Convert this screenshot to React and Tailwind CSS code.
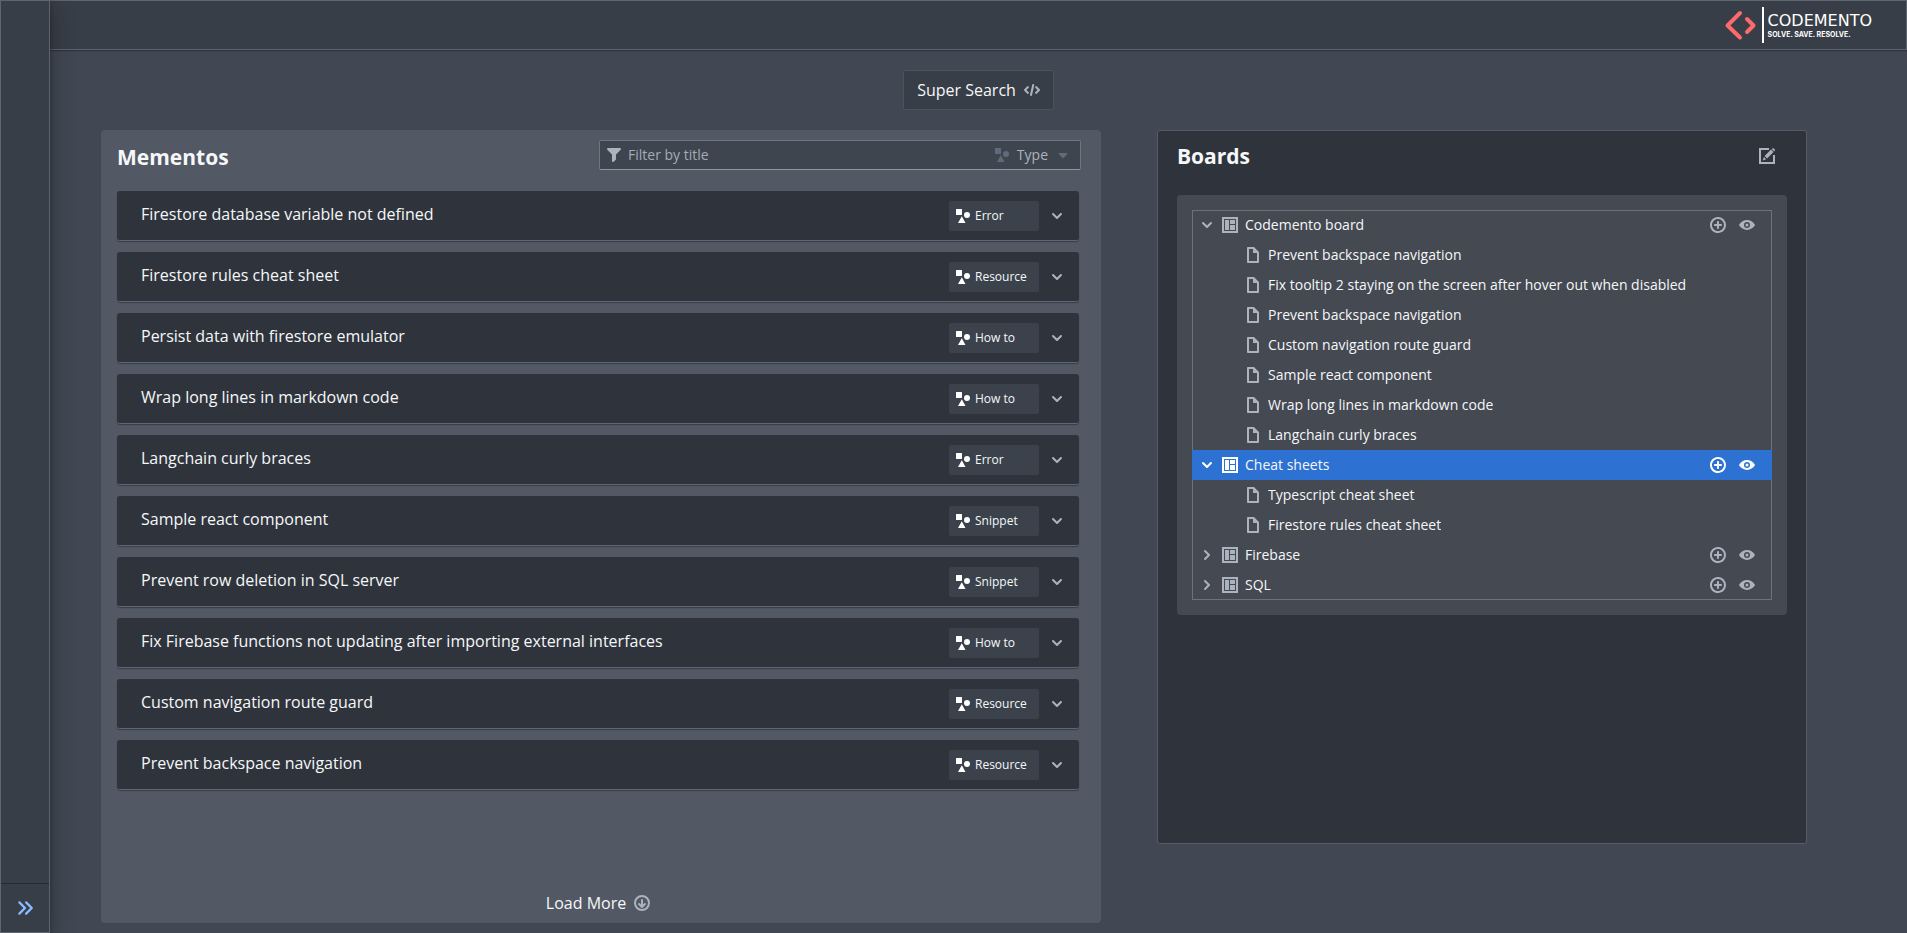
import { useState } from 'react';

const ICONS = {
  chevronDown: 'M12 5c-.28 0-.53.11-.71.29L8 8.59l-3.29-3.3a1.003 1.003 0 00-1.42 1.42l4 4c.18.18.43.29.71.29s.53-.11.71-.29l4-4A1.003 1.003 0 0012 5z',
  chevronRight: 'M10.71 7.29l-4-4a1.003 1.003 0 00-1.42 1.42L8.59 8 5.3 11.29c-.19.18-.3.43-.3.71a1.003 1.003 0 001.71.71l4-4c.18-.18.29-.43.29-.71 0-.28-.11-.53-.29-.71z',
  doubleChevron: 'M9 8c0-.28-.11-.53-.29-.71l-5-5a1.003 1.003 0 00-1.42 1.42L6.59 8 2.3 12.29c-.19.18-.3.43-.3.71a1.003 1.003 0 001.71.71l5-5C8.89 8.53 9 8.28 9 8zm5.71-.71l-5-5a1.003 1.003 0 00-1.42 1.42L12.59 8 8.3 12.29c-.19.18-.3.43-.3.71a1.003 1.003 0 001.71.71l5-5c.18-.18.29-.43.29-.71 0-.28-.11-.53-.29-.71z',
  filter: 'M13.99.99h-12a1.003 1.003 0 00-.71 1.71l4.71 4.71V14a1.003 1.003 0 001.71.71l2-2c.18-.18.29-.43.29-.71V7.41L14.7 2.7a1.003 1.003 0 00-.71-1.71z',
  code: 'M15.7 7.3l-3-3a1 1 0 00-1.4 1.4L13.6 8l-2.3 2.3a1 1 0 001.4 1.4l3-3a1 1 0 000-1.4zM4.7 5.7a1 1 0 00-1.4-1.4l-3 3a1 1 0 000 1.4l3 3a1 1 0 001.4-1.4L2.4 8l2.3-2.3zM9.2 2a1 1 0 00-1 .8l-2.2 10a1 1 0 002 .4l2.2-10a1 1 0 00-1-1.2z',
  add: 'M10.99 6.99h-2v-2c0-.55-.45-1-1-1s-1 .45-1 1v2h-2c-.55 0-1 .45-1 1s.45 1 1 1h2v2c0 .55.45 1 1 1s1-.45 1-1v-2h2c.55 0 1-.45 1-1s-.45-1-1-1zm-3-7c-4.42 0-8 3.58-8 8s3.58 8 8 8 8-3.58 8-8-3.58-8-8-8zm0 14c-3.31 0-6-2.69-6-6s2.69-6 6-6 6 2.69 6 6-2.69 6-6 6z',
  eye: 'M8 6.500a1.500 1.500 0 100 3 1.500 1.500 0 000-3zm7.9 1.200C14.2 5 11.2 3 8 3S1.8 5 .1 7.700a.6.6 0 000 .6C1.8 11 4.8 13 8 13s6.2-2 7.900-4.700a.6.6 0 000-.6zM8 11a3 3 0 110-6 3 3 0 010 6z',
  document: 'M9 0H3c-.55 0-1 .45-1 1v14c0 .55.45 1 1 1h10c.55 0 1-.45 1-1V5L9 0zm3 14H4V2h4v4h4v8z',
  board: 'M0 0h16v16H0zM2 2v12h12V2zM3 3h4v10H3zM8 3h5v4H8zM8 8h5v5H8z',
  edit: 'M14 14H2V2h8V0H0v16h16V7h-2zM3.500 12.500l3.700-1.300L5 9zM12 1.500L5.600 8l2.500 2.500L14.500 4zM15.300 3.300a1.700 1.700 0 10-2.500-2.500l-.1.100 2.500 2.500z',
  circleDown: 'M8 0a8 8 0 100 16A8 8 0 008 0zm0 14A6 6 0 118 2a6 6 0 010 12zm3-6c-.28 0-.53.11-.71.29L9 9.590V5c0-.55-.45-1-1-1s-1 .45-1 1v4.590L5.710 8.290a1.003 1.003 0 00-1.420 1.420l3 3c.18.18.43.29.71.29s.53-.11.71-.29l3-3A1.003 1.003 0 0011 8z',
  shapes: 'M1.500 1h5c.3 0 .5.2.5.5v5c0 .3-.2.5-.5.5h-5a.5.5 0 01-.5-.5v-5c0-.3.2-.5.5-.5zM12 4a3 3 0 110 6 3 3 0 010-6zM6.800 8.300l3.700 6.700h-7.500z',
  caret: 'M4 6h8a.5.5 0 01.4.8l-4 4.500a.5.5 0 01-.8 0l-4-4.500A.5.500 0 014 6z',
};

const MEMENTOS = [
  { title: 'Firestore database variable not defined', type: 'Error' },
  { title: 'Firestore rules cheat sheet', type: 'Resource' },
  { title: 'Persist data with firestore emulator', type: 'How to' },
  { title: 'Wrap long lines in markdown code', type: 'How to' },
  { title: 'Langchain curly braces', type: 'Error' },
  { title: 'Sample react component', type: 'Snippet' },
  { title: 'Prevent row deletion in SQL server', type: 'Snippet' },
  { title: 'Fix Firebase functions not updating after importing external interfaces', type: 'How to' },
  { title: 'Custom navigation route guard', type: 'Resource' },
  { title: 'Prevent backspace navigation', type: 'Resource' },
];

const BOARDS = [
  {
    name: 'Codemento board',
    items: [
      'Prevent backspace navigation',
      'Fix tooltip 2 staying on the screen after hover out when disabled',
      'Prevent backspace navigation',
      'Custom navigation route guard',
      'Sample react component',
      'Wrap long lines in markdown code',
      'Langchain curly braces',
    ],
  },
  { name: 'Cheat sheets', items: ['Typescript cheat sheet', 'Firestore rules cheat sheet'] },
  { name: 'Firebase', items: [] },
  { name: 'SQL', items: [] },
];

function Icon({ name, className = 'size-4 text-[#abb3bf]' }) {
  return (
    <svg viewBox="0 0 16 16" aria-hidden="true" className={`shrink-0 ${className}`}>
      <path d={ICONS[name]} fill="currentColor" fillRule="evenodd" />
    </svg>
  );
}

function Logo() {
  return (
    <a href="#" className="flex items-center text-white">
      <svg viewBox="0 0 40 36" className="h-9 w-10" aria-hidden="true">
        <g fill="none" stroke="#fc6a6c" strokeWidth="4" strokeLinecap="round" strokeLinejoin="round">
          <path d="M16 6L3.500 18.500 16 30.500" />
          <path d="M23 12l6.500 6.500L23 25" />
        </g>
        <path d="M38 0h2v36h-2z" fill="#fff" />
      </svg>
      <span className="ml-1 flex flex-col gap-[2px] pt-[2px]">
        <span className="font-['DejaVu_Sans',sans-serif] text-base leading-4">CODEMENTO</span>
        <span className="font-['Inter',sans-serif] text-[7px] leading-2 font-bold">SOLVE. SAVE. RESOLVE.</span>
      </span>
    </a>
  );
}

function MementoRow({ title, type }) {
  return (
    <li className="flex h-[50px] items-center rounded-[3px] border-b border-[#5f6872] bg-[#2f343c] pr-[14px] pl-6 shadow-[0_1px_1px_rgba(17,20,24,0.4)]">
      <span className="flex-1 truncate pb-1">{title}</span>
      <span className="flex h-[30px] w-[90px] items-center gap-1 rounded-xs bg-[#3b424c] pl-[6px] text-xs">
        <Icon name="shapes" className="size-4 text-white" />
        {type}
      </span>
      <button type="button" aria-label={`Expand ${title}`} className="ml-[10px] cursor-pointer">
        <Icon name="chevronDown" />
      </button>
    </li>
  );
}

function BoardNode({ board, open, selected, onToggle, onSelect }) {
  const iconColor = selected ? 'size-4 text-white' : 'size-4 text-[#abb3bf]';

  return (
    <li>
      <div className={`flex h-[30px] items-center pr-[17px] pl-[7px] ${selected ? 'bg-[#2d72d2]' : ''}`}>
        <button type="button" aria-label={`Toggle ${board.name}`} onClick={onToggle} className="cursor-pointer">
          <Icon name={open ? 'chevronDown' : 'chevronRight'} className={iconColor} />
        </button>
        <button type="button" onClick={onSelect} className="ml-[7px] flex flex-1 cursor-pointer items-center gap-[7px] text-left">
          <Icon name="board" className={iconColor} />
          {board.name}
        </button>
        <span className="flex gap-[13px]">
          <button type="button" aria-label={`Add to ${board.name}`} className="cursor-pointer">
            <Icon name="add" className={iconColor} />
          </button>
          <button type="button" aria-label={`View ${board.name}`} className="cursor-pointer">
            <Icon name="eye" className={iconColor} />
          </button>
        </span>
      </div>
      {open && (
        <ul>
          {board.items.map((item, i) => (
            <li key={i} className="flex h-[30px] items-center gap-[7px] pl-[53px]">
              <Icon name="document" />
              <span className="truncate">{item}</span>
            </li>
          ))}
        </ul>
      )}
    </li>
  );
}

export default function App() {
  const [filter, setFilter] = useState('');
  const [type, setType] = useState('');
  const [selected, setSelected] = useState('Cheat sheets');
  const [openBoards, setOpenBoards] = useState(['Codemento board', 'Cheat sheets']);

  const toggleBoard = (name) => {
    setOpenBoards((p) => (p.includes(name) ? p.filter((n) => n !== name) : [...p, name]));
  };

  const visible = MEMENTOS.filter(
    (m) => m.title.toLowerCase().includes(filter.toLowerCase()) && (!type || m.type === type)
  );

  return (
    <div className="flex min-h-screen bg-[#414853] font-['Open_Sans','Noto_Sans',sans-serif] text-[#f6f7f9]">
      <aside className="z-10 flex w-[50px] shrink-0 flex-col border border-[#5f656e] bg-[#383e47] shadow-[0_2px_4px_rgba(17,20,24,0.4),0_8px_24px_rgba(17,20,24,0.4)]">
        <button
          type="button"
          aria-label="Expand sidebar"
          className="mt-auto flex h-[49px] cursor-pointer items-center justify-center border-t border-[#252a31]"
        >
          <Icon name="doubleChevron" className="size-[18px] text-[#8abbff]" />
        </button>
      </aside>

      <div className="flex min-w-0 flex-1 flex-col">
        <header className="flex h-[50px] items-center justify-end border border-l-0 border-[#5f656e] bg-[#383e47] pr-[34px] shadow-[0_1px_1px_rgba(17,20,24,0.4)]">
          <Logo />
        </header>

        <main className="flex flex-1 flex-col pt-5 pr-[100px] pb-[10px] pl-[51px]">
          {/* the search button is centred on the page, not on the padded columns */}
          <div className="-mr-[100px] -ml-[51px] flex justify-center">
            <button
              type="button"
              className="flex h-10 cursor-pointer items-center gap-2 rounded-xs border border-[#4b535e] bg-[#383e47] px-[13px]"
            >
              Super Search
              <Icon name="code" />
            </button>
          </div>

          <div className="mt-5 grid flex-1 grid-cols-[minmax(0,1000fr)_minmax(0,650fr)] gap-14">
            <section className="flex flex-col rounded-[4px] bg-[#525965] pt-[10px] pr-[22px] pb-2 pl-4">
              <div className="-mr-[2px] flex items-start justify-between">
                <h2 className="pt-[3px] text-[21px] leading-7 font-bold">Mementos</h2>
                <div className="flex h-[30px] w-1/2 items-center rounded-xs border border-[#6f7682] border-b-[#9096a0] bg-[#3e454f] pr-[9px] pl-[6px] text-sm">
                  <Icon name="filter" />
                  <input
                    type="text"
                    aria-label="Filter by title"
                    placeholder="Filter by title"
                    value={filter}
                    onChange={(e) => setFilter(e.target.value)}
                    className="ml-[6px] min-w-0 flex-1 bg-transparent placeholder:text-[#a3abb7] focus:outline-none"
                  />
                  <Icon name="shapes" className="size-4 text-[#5f6b7c]" />
                  <select
                    aria-label="Type"
                    value={type}
                    onChange={(e) => setType(e.target.value)}
                    className="ml-[7px] field-sizing-content cursor-pointer appearance-none bg-transparent text-[#abb3bf] focus:outline-none"
                  >
                    <option value="">Type</option>
                    <option>Error</option>
                    <option>Resource</option>
                    <option>How to</option>
                    <option>Snippet</option>
                  </select>
                  <Icon name="caret" className="ml-[7px] size-4 text-[#5f6b7c]" />
                </div>
              </div>

              <ul className="mt-5 flex flex-col gap-[11px]">
                {visible.map((m) => (
                  <MementoRow key={m.title} {...m} />
                ))}
              </ul>

              <button type="button" className="mx-auto mt-auto flex cursor-pointer items-center gap-2 leading-6">
                Load More
                <Icon name="circleDown" />
              </button>
            </section>

            <section className="min-h-[714px] self-start rounded-[3px] border border-[#545b66] bg-[#2f343c] px-[19px] pt-[11px]">
              <div className="flex items-center justify-between pr-3">
                <h2 className="text-[21px] leading-7 font-bold">Boards</h2>
                <button type="button" aria-label="Edit boards" className="cursor-pointer">
                  <Icon name="edit" />
                </button>
              </div>

              <div className="mt-[25px] rounded-[4px] bg-[#444952] p-[15px]">
                <ul className="text-sm shadow-[inset_0_0_0_1px_#6c727c]">
                  {BOARDS.map((b) => (
                    <BoardNode
                      key={b.name}
                      board={b}
                      open={openBoards.includes(b.name)}
                      selected={selected === b.name}
                      onToggle={() => toggleBoard(b.name)}
                      onSelect={() => setSelected(b.name)}
                    />
                  ))}
                </ul>
              </div>
            </section>
          </div>
        </main>
      </div>
    </div>
  );
}
